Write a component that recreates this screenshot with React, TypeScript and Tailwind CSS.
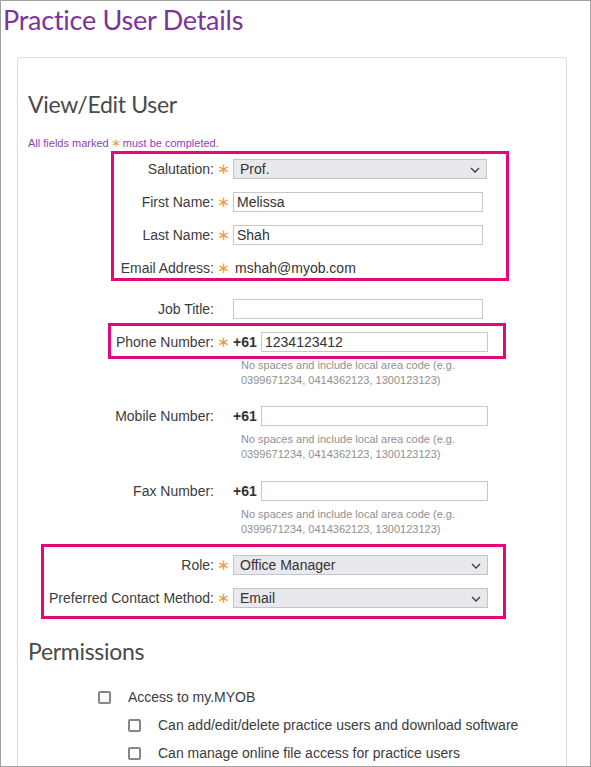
import { FC, ReactNode } from "react";

const Star = () => (
  <span className="flex w-[19px] shrink-0 justify-center text-[15px] leading-none text-[#f39a3c] [font-family:'DejaVu_Sans',sans-serif]">
    ∗
  </span>
);

const NoStar = () => <span className="w-[19px] shrink-0" />;

const Chevron = () => (
  <svg
    className="pointer-events-none absolute right-[6px] top-[7px]"
    width="10"
    height="6"
    viewBox="0 0 10 6"
    fill="none"
  >
    <path d="M1 1l4 4 4-4" stroke="#3a3a3a" strokeWidth="1.3" />
  </svg>
);

const Select: FC<{ value: string; width: string }> = ({ value, width }) => (
  <div
    className={`relative flex h-5 items-center border border-[#c4c4c8] bg-[#e9e9ed] pl-[6px] text-[14px] text-[#333] ${width}`}
  >
    {value}
    <Chevron />
  </div>
);

const TextBox: FC<{ value?: string; width: string }> = ({ value, width }) => (
  <div
    className={`flex h-5 items-center border border-[#c8c8c8] bg-white pl-[3px] text-[14px] text-[#333] ${width}`}
  >
    {value}
  </div>
);

const Row: FC<{
  label: string;
  required?: boolean;
  className?: string;
  children: ReactNode;
}> = ({ label, required, className = "", children }) => (
  <div className={`flex h-5 items-center ${className}`}>
    <div className="w-[196px] shrink-0 text-right text-[14px] text-[#3c3c3c]">
      {label}
    </div>
    {required ? <Star /> : <NoStar />}
    {children}
  </div>
);

const Help = () => (
  <div className="ml-[223px] mt-[6px] text-[11px] leading-[15px] text-[#909090]">
    <div>No spaces and include local area code (e.g.</div>
    <div>0399671234, 0414362123, 1300123123)</div>
  </div>
);

const Phone: FC<{ value?: string }> = ({ value }) => (
  <div className="flex items-center">
    <span className="w-[28px] text-[14px] font-bold text-[#333]">+61</span>
    <TextBox value={value} width="w-[227px]" />
  </div>
);

const Check: FC<{ label: string; indent?: boolean }> = ({ label, indent }) => (
  <div className={`flex h-[13px] items-center ${indent ? "ml-[110px]" : "ml-[80px]"}`}>
    <div className="h-[13px] w-[13px] rounded-[2px] border-2 border-[#85858b]" />
    <span className="ml-[17px] text-[14px] text-[#3c3c3c]">{label}</span>
  </div>
);

export default function App() {
  return (
    <div className="relative h-[767px] w-[591px] overflow-hidden border border-[#a0a0a0] bg-white [font-family:'Liberation_Sans',Arial,sans-serif]">
      <h1 className="ml-[2px] mt-[2px] text-[27px] leading-[34px] tracking-[-0.25px] text-[#7d3399] [font-family:Lato,sans-serif]">
        Practice User Details
      </h1>

      <div className="ml-[16px] mt-[20px] h-[720px] w-[550px] rounded-[3px] border border-[#dcdcdc]">
        <h2 className="ml-[10px] mt-[32px] text-[23px] leading-[28px] tracking-[-0.3px] text-[#4a4a4a] [font-family:Lato,sans-serif]">
          View/Edit User
        </h2>
        <p className="ml-[10px] mt-[18px] flex items-center text-[11px] leading-[14px] text-[#8e3fb3]">
          All fields marked
          <span className="mx-[2px] text-[12px] text-[#f39a3c] [font-family:'DejaVu_Sans',sans-serif]">
            ∗
          </span>
          must be completed.
        </p>

        <div className="mt-[9px]">
          <Row label="Salutation:" required>
            <Select value="Prof." width="w-[254px]" />
          </Row>
          <Row label="First Name:" required className="mt-[13px]">
            <TextBox value="Melissa" width="w-[250px]" />
          </Row>
          <Row label="Last Name:" required className="mt-[13px]">
            <TextBox value="Shah" width="w-[250px]" />
          </Row>
          <Row label="Email Address:" required className="mt-[13px]">
            <span className="ml-[2px] text-[14px] text-[#333]">mshah@myob.com</span>
          </Row>
          <Row label="Job Title:" className="mt-[21px]">
            <TextBox width="w-[250px]" />
          </Row>
          <Row label="Phone Number:" required className="mt-[13px]">
            <Phone value="1234123412" />
          </Row>
          <Help />
          <Row label="Mobile Number:" className="mt-[18px]">
            <Phone />
          </Row>
          <Help />
          <Row label="Fax Number:" className="mt-[19px]">
            <Phone />
          </Row>
          <Help />
          <Row label="Role:" required className="mt-[18px]">
            <Select value="Office Manager" width="w-[255px]" />
          </Row>
          <Row label="Preferred Contact Method:" required className="mt-[13px]">
            <Select value="Email" width="w-[255px]" />
          </Row>
        </div>

        <h2 className="ml-[10px] mt-[29px] text-[23px] leading-[28px] tracking-[-0.3px] text-[#4a4a4a] [font-family:Lato,sans-serif]">
          Permissions
        </h2>
        <div className="mt-[26px] flex flex-col gap-[15px]">
          <Check label="Access to my.MYOB" />
          <Check label="Can add/edit/delete practice users and download software" indent />
          <Check label="Can manage online file access for practice users" indent />
        </div>
      </div>

      {/* annotation boxes */}
      <div className="absolute left-[110px] top-[150px] h-[130px] w-[398px] border-[3px] border-[#e5087c]" />
      <div className="absolute left-[107px] top-[322px] h-[36px] w-[398px] border-[3px] border-[#e5087c]" />
      <div className="absolute left-[40px] top-[543px] h-[75px] w-[465px] border-[3px] border-[#e5087c]" />
    </div>
  );
}
